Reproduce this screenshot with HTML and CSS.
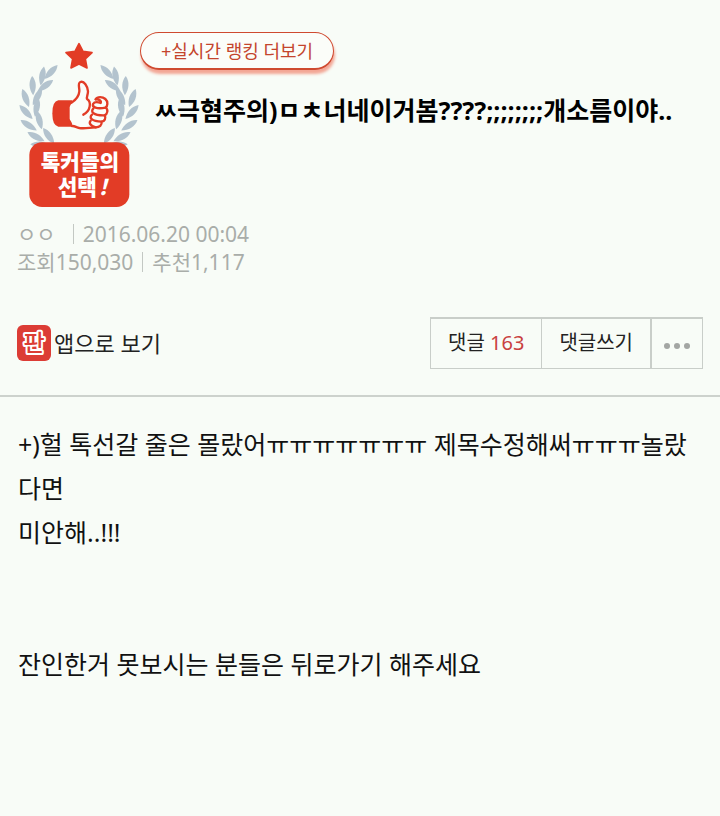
FILE: index.html
```html
<!DOCTYPE html>
<html lang="ko">

<head>
    <meta charset="UTF-8">
    <meta name="viewport" content="width=device-width, initial-scale=1.0">
    <title>톡커들의 선택</title>
    <link rel="stylesheet" href="styles.css">
</head>

<body>
    <header class="header">
        <div class="top">
            <svg class="badge" viewBox="24 36 366 498" role="img" aria-label="톡커들의 선택!">
                <defs>
                    <path id="leaf" d="M0 -29C13 -12 12 10 0 29C-12 10 -13 -12 0 -29Z" />
                    <g id="branch">
                        <use href="#leaf" transform="translate(123 126) rotate(43)" />
                        <use href="#leaf" transform="translate(97 138) rotate(10)" />
                        <use href="#leaf" transform="translate(106 167) rotate(54)" />
                        <use href="#leaf" transform="translate(68 167) rotate(-3)" />
                        <use href="#leaf" transform="translate(82 200) rotate(28)" />
                        <use href="#leaf" transform="translate(47 204) rotate(-20)" />
                        <use href="#leaf" transform="translate(80 232) rotate(10)" />
                        <use href="#leaf" transform="translate(48 246) rotate(-43)" />
                        <use href="#leaf" transform="translate(88 270) rotate(-15)" />
                        <use href="#leaf" transform="translate(56 286) rotate(-57)" />
                        <use href="#leaf" transform="translate(78 320) rotate(-62)" />
                        <use href="#leaf" transform="translate(116 318) rotate(-35)" />
                        <use href="#leaf" transform="translate(90 344) rotate(-88)" />
                    </g>
                </defs>
                <g fill="#b3c3ce">
                    <use href="#branch" />
                    <use href="#branch" transform="translate(414 0) scale(-1 1)" />
                </g>
                <path d="M207 41L219 64L246 68L226 87L231 114L207 102L183 114L188 87L168 68L195 64Z" fill="#e23c26" stroke="#e23c26" stroke-width="5" stroke-linejoin="round" />
                <!-- thumb up -->
                <path d="M186 211H145Q127 214 127 250Q127 287 145 290H192Z" fill="#e23c26" />
                <path d="M179 231C184 214 206 207 208 184C209 173 202 160 211 156C222 152 233 168 234 184C234 194 229 201 231 207C242 209 244 218 249 222L257 208C262 199 278 200 286 207C296 216 292 228 287 233C296 240 292 252 284 256C289 264 284 274 275 275C276 286 269 292 257 292C240 292 226 297 208 294C198 292 194 287 186 288C189 278 181 274 179 266Z" fill="#fbfdf9" />
                <g fill="none" stroke="#e23c26" stroke-width="7" stroke-linecap="round" stroke-linejoin="round">
                    <path d="M185 218C199 208 207 198 208 184C209 173 202 160 211 156C222 152 233 168 234 184C234 194 229 201 231 207C245 216 242 243 220 254" />
                    <path d="M257 208C262 199 278 200 286 207C296 216 292 228 287 233C296 240 292 252 284 256C289 264 284 274 275 275C276 286 269 292 257 292C240 292 226 297 208 294C198 292 194 287 186 288" />
                    <path d="M257 208C267 207 275 213 272 219C264 216 254 214 249 222C246 232 259 238 287 233" />
                    <path d="M250 236C241 245 249 257 284 256" />
                    <path d="M246 254C236 263 244 274 275 275" />
                    <path d="M242 272C236 279 240 287 257 292" />
                </g>
                <rect x="58" y="337" width="300" height="194" rx="38" fill="#e23c26" />
                <text class="badge-text" x="210" y="419">톡커들의</text>
                <text class="badge-text" x="202" y="494">선택</text>
                <text class="badge-text bang" x="279" y="494">!</text>
            </svg>
            <div class="heading">
                <button class="more-ranking" type="button">+실시간 랭킹 더보기</button>
                <h1 class="title">ㅆ극혐주의)ㅁㅊ너네이거봄????;;;;;;;;개소름이야..</h1>
            </div>
        </div>

        <div class="meta">
            <div class="meta-row">
                <span class="writer">ㅇㅇ</span>
                <span class="bar"></span>
                <span>2016.06.20 00:04</span>
            </div>
            <div class="meta-row">
                <span>조회150,030</span>
                <span class="bar"></span>
                <span>추천1,117</span>
            </div>
        </div>

        <div class="actions">
            <a class="app-link" href="#">
                <svg class="app-icon" viewBox="0 0 34 36" aria-hidden="true">
                    <rect width="34" height="36" rx="6" fill="#dc3c35" />
                    <text class="app-mark" x="17" y="26">판</text>
                </svg>
                앱으로 보기
            </a>
            <div class="buttons">
                <button class="action" type="button">댓글 <span class="count">163</span></button>
                <button class="action" type="button">댓글쓰기</button>
                <button class="action dots" type="button" aria-label="더보기">
                    <svg width="26" height="6" viewBox="0 0 26 6" fill="#a3a6a3">
                        <circle cx="3" cy="3" r="3" />
                        <circle cx="13" cy="3" r="3" />
                        <circle cx="23" cy="3" r="3" />
                    </svg>
                </button>
            </div>
        </div>
    </header>

    <main class="content">
        <p>+)헐 톡선갈 줄은 몰랐어ㅠㅠㅠㅠㅠㅠㅠ 제목수정해써ㅠㅠㅠ놀랐다면<br>미안해..!!!</p>
        <p>잔인한거 못보시는 분들은 뒤로가기 해주세요</p>
    </main>
</body>

</html>
```

FILE: styles.css
```css
* {
    box-sizing: border-box;
}

body {
    margin: 0;
    background-color: #f8fcf7;
    color: #111;
    font-family: "Noto Sans", "Noto Sans CJK KR", sans-serif;
}

button {
    font-family: inherit;
    cursor: pointer;
}

.header {
    padding: 32px 17px 26px;
    border-bottom: 2px solid #cdd2cd;
}

.top {
    display: flex;
    align-items: flex-start;
}

.badge {
    flex: none;
    width: 122px;
    height: 166px;
    margin: 10px 0 0 1px;
}

.badge-text {
    font-family: "Noto Sans CJK KR", sans-serif;
    font-size: 64px;
    font-weight: 900;
    text-anchor: middle;
    fill: #fff;
}

.bang {
    font-style: italic;
}

.more-ranking {
    display: block;
    height: 38px;
    padding: 0 20px;
    border: 1px solid #cf4a30;
    border-bottom-width: 2px;
    border-radius: 19px;
    background-color: #fbfdf9;
    box-shadow: 1px 4px 3px #f3a695;
    color: #c4452d;
    font-size: 18px;
    line-height: 32px;
}

.title {
    margin: 22px 0 0 14px;
    font-size: 25px;
    font-weight: 700;
    line-height: 36px;
    color: #000;
}

.meta {
    margin-top: 12px;
    color: #a9ada9;
    font-size: 21px;
    line-height: 28px;
}

.meta-row {
    display: flex;
    align-items: center;
    gap: 9px;
}

.writer {
    margin-right: 8px;
}

.bar {
    width: 1px;
    height: 20px;
    background-color: #c3c8c3;
}

.actions {
    display: flex;
    justify-content: space-between;
    align-items: center;
    margin-top: 41px;
}

.app-link {
    display: flex;
    align-items: center;
    gap: 3px;
    color: #222;
    font-size: 22px;
    line-height: 36px;
    text-decoration: none;
}

.app-icon {
    width: 34px;
    height: 36px;
}

.app-mark {
    font-family: "Noto Sans CJK KR", sans-serif;
    font-size: 23px;
    font-weight: 500;
    text-anchor: middle;
    fill: #dc3c35;
    stroke: #fff;
    stroke-width: 4px;
    stroke-linejoin: round;
    paint-order: stroke;
}

.buttons {
    display: flex;
    border: 1px solid #c9cec9;
    border-top-width: 2px;
}

.action {
    height: 49px;
    padding: 0 17px 4px;
    border: none;
    background: none;
    color: #222;
    font-size: 20px;
}

.action + .action {
    border-left: 1px solid #c9cec9;
}

.action.dots {
    display: flex;
    align-items: center;
    padding: 4px 12px 0;
    border-left-width: 2px;
}

.count {
    color: #c94040;
}

.content {
    padding: 25px 18px;
    font-size: 25px;
    line-height: 44px;
}

.content p {
    margin: 0 0 88px;
}
```
